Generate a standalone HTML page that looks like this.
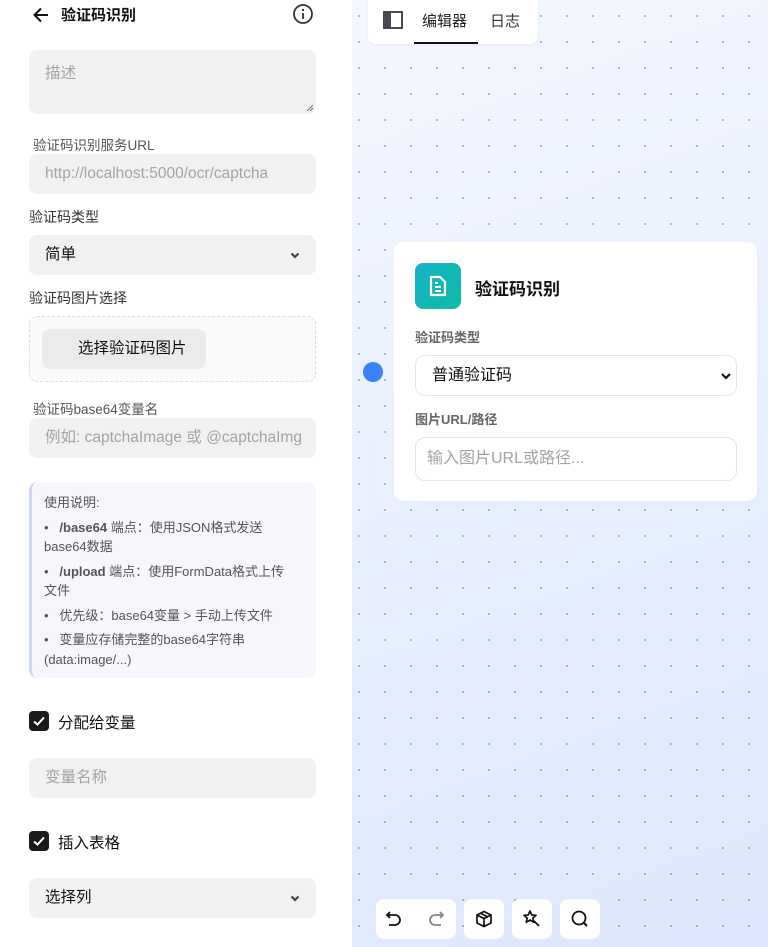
<!DOCTYPE html>
<html><head><meta charset="utf-8"><style>
*{box-sizing:border-box;margin:0;padding:0}
body{width:768px;height:947px;overflow:hidden;position:relative;font-family:"Liberation Sans","Noto Sans CJK SC",sans-serif;background:#fff}
.a{position:absolute}
.left{left:0;top:0;width:352px;height:947px;background:#fff}
.inp{position:absolute;left:29px;width:287px;height:40px;background:#f1f1f1;border-radius:8px;font-size:15.5px;color:#a3a3a8;padding-left:16px;line-height:40px;white-space:nowrap;overflow:hidden}
.lab{position:absolute;font-size:14px;color:#333}
.lab2{position:absolute;left:33px;font-size:13.5px;color:#555}
.chev{position:absolute;right:15px;top:14px}
.cb{position:absolute;left:29px;width:20px;height:20px;background:#1a1a1a;border-radius:4px}
.canvas{left:352px;top:0;width:416px;height:947px;background-image:radial-gradient(circle,#9aa3b3 0.8px,transparent 1.1px),linear-gradient(160deg,#f4f7fe 0%,#e7effd 50%,#dde8fc 100%);background-size:26px 26px,100% 100%;background-position:-6px 3px,0 0}
.tb{position:absolute;background:#fff;border-radius:8px;height:40px;top:899px}
.info div{white-space:nowrap}
</style></head><body>
<div class="a left">
  <svg class="a" style="left:31px;top:5px" width="20" height="20" viewBox="0 0 20 20"><path d="M17 10H4M10 3.5L3.5 10 10 16.5" fill="none" stroke="#111" stroke-width="2"/></svg>
  <div class="a" style="left:61px;top:4px;font-size:15px;font-weight:bold;color:#111">验证码识别</div>
  <svg class="a" style="left:292px;top:3px" width="22" height="22" viewBox="0 0 22 22"><circle cx="11" cy="11" r="9" fill="none" stroke="#333" stroke-width="1.8"/><circle cx="11" cy="7" r="1.2" fill="#333"/><path d="M11 10v6" stroke="#333" stroke-width="1.8"/></svg>
  <div class="inp" style="top:50px;height:64px;line-height:normal;padding-top:11px">描述</div>
  <svg class="a" style="left:306px;top:104px" width="8" height="8"><path d="M1 7L7 1M4 7L7 4" stroke="#777"/></svg>
  <div class="lab2" style="top:134px">验证码识别服务URL</div>
  <div class="inp" style="top:154px">http://localhost:5000/ocr/captcha</div>
  <div class="lab" style="left:29px;top:207px">验证码类型</div>
  <div class="inp" style="top:235px;color:#111">简单<svg class="chev" width="12" height="12" viewBox="0 0 12 12"><path d="M2.5 4.5L6 8 9.5 4.5" fill="none" stroke="#444" stroke-width="2.2"/></svg></div>
  <div class="lab" style="left:29px;top:288px">验证码图片选择</div>
  <div class="a" style="left:29px;top:316px;width:287px;height:66px;background:#fafafa;border:1px dashed #ddd;border-radius:8px"></div>
  <div class="a" style="left:42px;top:329px;width:164px;height:40px;background:#ebebeb;border-radius:8px;font-size:15.5px;color:#111;line-height:40px;padding-left:36px">选择验证码图片</div>
  <div class="lab2" style="top:398px">验证码base64变量名</div>
  <div class="inp" style="top:418px">例如: captchaImage 或 @captchaImg</div>
  <div class="a info" style="left:29px;top:482px;width:287px;height:196px;background:#f5f7fd;border-left:3px solid #cdd4f6;border-radius:8px;padding:11px 0 0 12px;font-size:13px;color:#555;line-height:19.5px">
    <div style="margin-bottom:5px">使用说明:</div>
    <div style="margin-bottom:5px">•&nbsp;&nbsp;&nbsp;<b>/base64</b> 端点：使用JSON格式发送<br>base64数据</div>
    <div style="margin-bottom:5px">•&nbsp;&nbsp;&nbsp;<b>/upload</b> 端点：使用FormData格式上传<br>文件</div>
    <div style="margin-bottom:5px">•&nbsp;&nbsp;&nbsp;优先级：base64变量 &gt; 手动上传文件</div>
    <div>•&nbsp;&nbsp;&nbsp;变量应存储完整的base64字符串<br>(data:image/...)</div>
  </div>
  <div class="cb" style="top:711px"><svg width="20" height="20"><path d="M5 10.5l3.5 3 6.5-7" fill="none" stroke="#fff" stroke-width="2"/></svg></div>
  <div class="a" style="left:58px;top:711px;font-size:15.5px;color:#111">分配给变量</div>
  <div class="inp" style="top:758px">变量名称</div>
  <div class="cb" style="top:831px"><svg width="20" height="20"><path d="M5 10.5l3.5 3 6.5-7" fill="none" stroke="#fff" stroke-width="2"/></svg></div>
  <div class="a" style="left:58px;top:831px;font-size:15.5px;color:#111">插入表格</div>
  <div class="inp" style="top:878px;color:#111">选择列<svg class="chev" width="12" height="12" viewBox="0 0 12 12"><path d="M2.5 4.5L6 8 9.5 4.5" fill="none" stroke="#444" stroke-width="2.2"/></svg></div>
</div>
<div class="a canvas"></div>
<div class="a" style="left:368px;top:0;width:170px;height:44px;background:#fff;border-radius:0 0 8px 8px;box-shadow:0 1px 3px rgba(0,0,0,.05)">
  <div class="a" style="left:15px;top:11px;width:20px;height:18px;border:2.5px solid #4a4a52;border-left-width:8px"></div>
  <div class="a" style="left:54px;top:10px;font-size:15px;color:#222">编辑器</div>
  <div class="a" style="left:46px;top:42px;width:64px;height:2px;background:#111"></div>
  <div class="a" style="left:122px;top:10px;font-size:15px;color:#333">日志</div>
</div>
<div class="a" style="left:363px;top:362px;width:20px;height:20px;border-radius:50%;background:#3b82f6"></div>
<div class="a" style="left:394px;top:242px;width:363px;height:259px;background:#fff;border-radius:10px">
  <div class="a" style="left:21px;top:21px;width:46px;height:46px;border-radius:8px;background:linear-gradient(135deg,#14b2c8,#10bba6)">
    <svg width="46" height="46" viewBox="0 0 46 46"><path d="M16 14h9l5 5v13H16z" fill="none" stroke="#fff" stroke-width="2.2"/><path d="M20 24h6M20 28h6M20 20h3" stroke="#fff" stroke-width="2"/></svg>
  </div>
  <div class="a" style="left:81px;top:33px;font-size:17px;font-weight:bold;color:#111">验证码识别</div>
  <div class="a" style="left:21px;top:85px;font-size:13px;font-weight:bold;color:#666">验证码类型</div>
  <div class="a" style="left:21px;top:113px;width:322px;height:41px;border:1.5px solid #e5e5e8;border-radius:10px;font-size:16px;color:#111;line-height:39px;padding-left:16px">普通验证码<svg class="a" style="right:4px;top:14px" width="12" height="12" viewBox="0 0 12 12"><path d="M2 4l4 4 4-4" fill="none" stroke="#111" stroke-width="2.2"/></svg></div>
  <div class="a" style="left:21px;top:167px;font-size:13px;font-weight:bold;color:#666">图片URL/路径</div>
  <div class="a" style="left:21px;top:195px;width:322px;height:44px;border:1.5px solid #e5e5e8;border-radius:10px;font-size:16px;color:#a3a3a8;line-height:41px;padding-left:11px">输入图片URL或路径...</div>
</div>
<div class="tb" style="left:376px;width:80px">
  <svg class="a" style="left:8px;top:10px" width="20" height="20" viewBox="0 0 20 20"><path d="M6 3L3 6l3 3M3 6h8a5 5 0 010 10H5" fill="none" stroke="#111" stroke-width="1.8"/></svg>
  <svg class="a" style="left:50px;top:10px" width="20" height="20" viewBox="0 0 20 20"><path d="M14 3l3 3-3 3M17 6H9a5 5 0 000 10h6" fill="none" stroke="#888" stroke-width="1.8"/></svg>
</div>
<div class="tb" style="left:464px;width:40px"><svg class="a" style="left:10px;top:10px" width="20" height="20" viewBox="0 0 20 20"><path d="M10 2.5l7 3.5v8l-7 3.5-7-3.5V6zM3 6l7 3.5L17 6M10 9.5v8M6.5 4.2l7 3.5" fill="none" stroke="#111" stroke-width="1.7"/></svg></div>
<div class="tb" style="left:512px;width:40px"><svg class="a" style="left:10px;top:10px" width="20" height="20" viewBox="0 0 20 20"><path d="M8 2l1.8 4 4.2.3-3.2 2.8 1 4.2L8 11l-3.8 2.3 1-4.2L2 6.3 6.2 6zM12 12l5 5" fill="none" stroke="#111" stroke-width="1.7" stroke-linejoin="round"/></svg></div>
<div class="tb" style="left:560px;width:40px"><svg class="a" style="left:10px;top:10px" width="20" height="20" viewBox="0 0 20 20"><circle cx="9" cy="9" r="6.5" fill="none" stroke="#111" stroke-width="1.8"/><path d="M14 14l3 3" stroke="#111" stroke-width="2"/></svg></div>
</body></html>
